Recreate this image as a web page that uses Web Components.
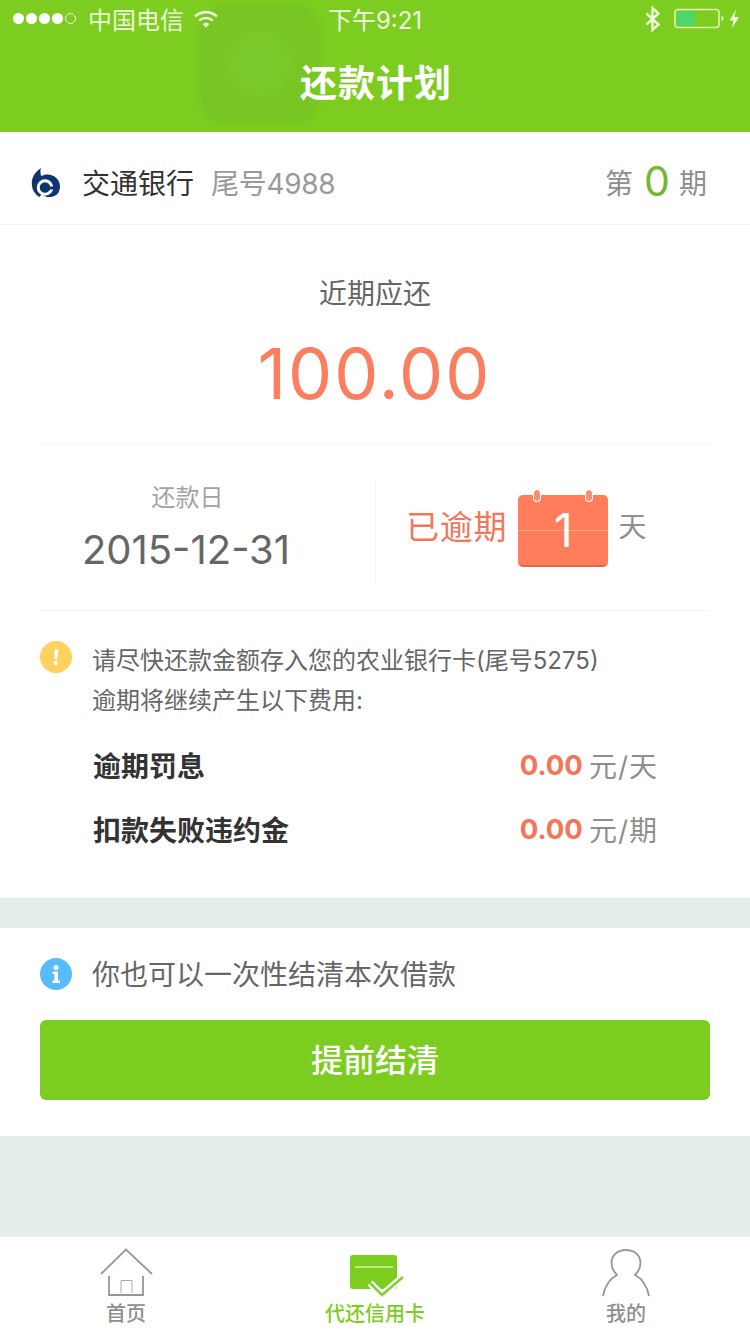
<!DOCTYPE html>
<html lang="zh"><head><meta charset="utf-8">
<style>
html,body{margin:0;padding:0;background:#e6eeeb}
body{width:750px;height:1334px;overflow:hidden;font-family:Inter,"Noto Sans CJK SC",sans-serif}
</style></head><body>
<app-page></app-page>
<template id="t-page"><style>
:host{display:flex;flex-direction:column;width:750px;height:1334px;position:relative;background:#e6eeeb}
.spacer{flex:1}
.gap{height:30px}
</style>
<app-header></app-header>
<bank-row></bank-row>
<main-panel></main-panel>
<div class="gap"></div>
<settle-panel></settle-panel>
<div class="spacer"></div>
<tab-bar></tab-bar>
</template>

<template id="t-header"><style>
:host{display:block;height:132px;background:#7dcc20;position:relative;color:#fff;overflow:hidden}
.blur{position:absolute;left:200px;top:4px;width:120px;height:120px;border-radius:26px;background:#78c523;filter:blur(2px)}
.blur i{position:absolute;left:28px;top:28px;width:64px;height:64px;border-radius:50%;background:#7cc92b;filter:blur(6px)}
.status{position:relative;height:40px;box-sizing:border-box;padding:0 10px 3px 13px;display:flex;align-items:center;font-size:24px}
.left{flex:1;display:flex;align-items:center;gap:8px}
.dots{display:flex;gap:2px;margin-right:4px}
.dots b{display:block;width:11px;height:11px;border-radius:50%;background:#fff}
.dots b:last-child{background:none;box-sizing:border-box;border:1px solid #fff}
.carrier{color:#eaf7d8}
.time{position:absolute;left:0;right:0;text-align:center;font-size:24px;color:#f1fae3}
.right{display:flex;align-items:center}
.bar{position:relative;height:92px;display:flex;align-items:center;justify-content:center;padding:0 0 10px 2px;box-sizing:border-box;font-size:37px;font-weight:700;letter-spacing:1px}
</style>
<div class="blur"><i></i></div>
<div class="status">
 <div class="left"><span class="dots"><b></b><b></b><b></b><b></b><b></b></span><span class="carrier">中国电信</span>
  <svg width="26" height="20" viewBox="0 0 26 20" style="margin-left:1px"><g fill="none" stroke="#eaf7d8" stroke-width="2.6"><path d="M2 7.500a16 16 0 0 1 22 0"/><path d="M6.200 11.600a10 10 0 0 1 13.600 0"/></g><path d="M9.600 15a5 5 0 0 1 6.800 0L13 18.800z" fill="#eaf7d8"/></svg></div>
 <div class="time">下午9:21</div>
 <div class="right">
  <svg width="18" height="26" viewBox="0 0 18 26" style="margin-right:12px"><path d="M2.500 7.500l12 11-6 5.500V2l6 5.500-12 11" fill="none" stroke="#eef9dd" stroke-width="2.400"/></svg>
  <svg width="66" height="22" viewBox="0 0 66 22"><rect x="1" y="1.500" width="44" height="18" rx="3" fill="none" stroke="#e4f6bc" stroke-width="1.500"/><rect x="3" y="3.500" width="18" height="14" fill="#4fd66a"/><path d="M47.500 8v5c1.500 0 2-1 2-2.500S49 8 47.500 8z" fill="#e4f6bc"/><path d="M62 1.500l-6.500 11h4l-1.500 8 7-11.500h-4.500z" fill="#eef9dd"/></svg>
 </div>
</div>
<div class="bar">还款计划</div>
</template>

<template id="t-bank"><style>
:host{display:flex;align-items:center;height:93px;background:#fff;box-sizing:border-box;border-bottom:1px solid #f1f3f2;padding:7px 43px 0 31px;font-size:28px}
svg{margin-right:21px;flex:none}
.name{color:#333;margin-right:17px}
.tail{color:#999;flex:1;letter-spacing:-.3px}
.per{color:#8f8f8f;display:flex;align-items:center;gap:10px}
.num{color:#74b82a;font-size:41px;line-height:1;width:24px;display:flex;justify-content:center;font-weight:400;margin-left:2px}
</style>
<svg width="30" height="30" viewBox="0 0 30 30"><path fill="#10346f" d="M10 1C4 5 .8 10 .8 16.500C.8 22 3.500 27 8.500 30L11 26.500C13 30 17 30.500 20 30C26 29.500 29 24.500 29 19.500C29 13 23.500 7.500 16.500 7.500C14 7.500 12 8.200 10.200 9C9.200 6 9.200 3.500 10 1Z"/><circle cx="14" cy="20.500" r="6.800" fill="#10346f" stroke="#fff" stroke-width="3"/><path d="M14 21h11" stroke="#10346f" stroke-width="3"/></svg>
<span class="name">交通银行</span><span class="tail">尾号4988</span>
<span class="per">第<span class="num">0</span>期</span>
</template>

<template id="t-main"><style>
:host{display:block;background:#fff;height:673px;box-sizing:border-box}
.sum{height:219px;box-sizing:border-box;margin:0 40px;border-bottom:1px solid #f3f4f4;display:flex;flex-direction:column;align-items:center;padding-top:51px}
.lab{font-size:28px;line-height:36px;color:#666}
.amt{font-weight:400;font-size:70px;line-height:84px;color:#fb7e5e;margin-top:20px;letter-spacing:2px;margin-left:-1px}
.mid{height:167px;box-sizing:border-box;margin:0 40px;border-bottom:1px solid #f3f4f4;display:grid;grid-template-columns:335px 335px;align-items:center}
.d{display:flex;flex-direction:column;align-items:center;height:106px;justify-content:center;padding-top:4px;box-sizing:border-box;margin-right:43px}
.d small{font-size:24px;line-height:32px;color:#a3a3a3;margin-left:3px}
.d b{font-weight:400;font-size:40px;line-height:54px;color:#666;margin-top:9px}
.o{height:106px;margin-top:10px;border-left:1px solid #f3f4f4;display:flex;align-items:center;padding-left:30px;box-sizing:border-box}
.o .t{font-size:33px;color:#f4765a;margin:0 11px 14px 0;letter-spacing:.8px}
.o .u{font-size:28px;color:#8f8f8f;margin:0 0 14px 10px}
cal-icon{margin-bottom:2px}
.bottom{padding:30px 40px 0}
.n{display:flex;gap:20px;font-size:24px;line-height:40px;color:#666}
.n svg{flex:none}
.rows{padding:24px 52px 0 53px;display:flex;flex-direction:column;gap:24px}
</style>
<div class="sum"><div class="lab">近期应还</div><div class="amt">100.00</div></div>
<div class="mid">
 <div class="d"><small>还款日</small><b>2015-12-31</b></div>
 <div class="o"><span class="t">已逾期</span><cal-icon>1</cal-icon><span class="u">天</span></div>
</div>
<div class="bottom">
 <div class="n"><svg width="32" height="32" viewBox="0 0 32 32"><circle cx="16" cy="16" r="16" fill="#fdd25f"/><path d="M14.500 8.500h4l-1.500 10h-2.500z" fill="#fff"/><circle cx="15.500" cy="22" r="2" fill="#fff"/></svg>
 <div>请尽快还款金额存入您的农业银行卡(尾号5275)<br>逾期将继续产生以下费用:</div></div>
 <div class="rows">
  <fee-row label="逾期罚息" value="0.00" unit="元/天"></fee-row>
  <fee-row label="扣款失败违约金" value="0.00" unit="元/期"></fee-row>
 </div>
</div>
</template>

<template id="t-cal"><style>
:host{display:flex;width:90px;height:72px;position:relative;box-sizing:border-box;border-radius:5px;background:#ff7d5a;border-bottom:2px solid #e2674a;color:#fff;font-size:46px;align-items:center;justify-content:center;font-weight:400}
.rule{position:absolute;left:0;right:0;top:35px;height:1px;background:#ffa68f}
i{position:absolute;top:-5px;width:8px;height:12px;border-radius:4px;background:#f78f75;border:1.500px solid #fff;box-sizing:border-box;border-top:none}
span{position:relative}
</style><div class="rule"></div><i style="left:15px"></i><i style="right:15px"></i><span><slot></slot></span></template>

<template id="t-fee"><style>
:host{display:flex;align-items:center;height:40px;font-size:28px}
.l{flex:1;font-weight:700;color:#333}
.v{font-weight:700;color:#f4765a;margin-right:6px;font-size:27.500px}
.u{color:#8f8f8f;letter-spacing:1px}
</style><span class="l"></span><span class="v"></span><span class="u"></span></template>

<template id="t-settle"><style>
:host{display:block;background:#fff;height:208px;box-sizing:border-box;padding:30px 40px 0}
.n{display:flex;align-items:center;gap:20px;font-size:28px;color:#666;height:32px}
.n span{position:relative;top:-1px}
.btn{display:flex;align-items:center;justify-content:center;height:80px;box-sizing:border-box;padding-bottom:4px;margin-top:30px;background:#7dcc20;border-radius:6px;color:#fff;font-size:32px;font-weight:500}
</style>
<div class="n"><svg width="32" height="32" viewBox="0 0 32 32"><circle cx="16" cy="16" r="16" fill="#56bdf8"/><circle cx="16" cy="9.500" r="2.500" fill="#fff"/><path d="M12.500 13.500h5.500v9h2v2.500h-7.500v-2.500h2v-6.500h-2z" fill="#fff"/></svg><span>你也可以一次性结清本次借款</span></div>
<div class="btn">提前结清</div>
</template>

<template id="t-tabs"><style>
:host{display:grid;grid-template-columns:252px 246px 252px;height:98px;background:#fff;box-sizing:border-box;border-top:1px solid #f0f2f1}
tab-item:last-child{margin-left:4px}
</style>
<tab-item label="首页"><svg width="60" height="50" viewBox="0 0 60 50" fill="none" stroke="#979797" stroke-width="1.800"><path d="M5 26L30 1.500 56 26"/><path d="M13 28v19h34V28"/><path d="M25 45V32.500h11V45" stroke-width="1" stroke="#aaa"/></svg></tab-item>
<tab-item label="代还信用卡" active><svg width="60" height="50" viewBox="0 0 60 50"><rect x="5" y="7" width="47" height="34" rx="3" fill="#7dcc20"/><path d="M10 19h38" stroke="#d6f0b4" stroke-width="1.400"/><path d="M25 35l12 12 21-18" fill="none" stroke="#fff" stroke-width="7"/><path d="M25 35l12 12 21-18" fill="none" stroke="#84cf36" stroke-width="2.600"/></svg></tab-item>
<tab-item label="我的"><svg width="60" height="50" viewBox="0 0 60 50" fill="none" stroke="#979797" stroke-width="1.800"><path d="M7 48C9 38 13 31 21 27c-3-3-5.500-7-5.500-12C15.500 7 22 2 30 2s14.500 5 14.500 13c0 5-2.500 9-5.500 12 8 4 12 11 14 21"/></svg></tab-item>
</template>

<template id="t-tab"><style>
:host{display:flex;flex-direction:column;align-items:center;padding-top:11px;font-size:20px;font-weight:500;color:#8e8e8e}
:host([active]){color:#7dcc20}
.ic{height:50px;display:flex}
.lb{line-height:28px;margin-top:2px}
</style><div class="ic"><slot></slot></div><div class="lb"></div></template>

<script>
function def(tag, tpl, init){
  customElements.define(tag, class extends HTMLElement{
    constructor(){super();const r=this.attachShadow({mode:'open'});r.appendChild(document.getElementById(tpl).content.cloneNode(true));}
    connectedCallback(){ if(init) init(this, this.shadowRoot); }
  });
}
def('app-header','t-header');
def('bank-row','t-bank');
def('main-panel','t-main');
def('cal-icon','t-cal');
def('fee-row','t-fee',(e,r)=>{r.querySelector('.l').textContent=e.getAttribute('label');r.querySelector('.v').textContent=e.getAttribute('value');r.querySelector('.u').textContent=e.getAttribute('unit');});
def('settle-panel','t-settle');
def('tab-bar','t-tabs');
def('tab-item','t-tab',(e,r)=>{r.querySelector('.lb').textContent=e.getAttribute('label');});
def('app-page','t-page');
</script>
</body></html>
